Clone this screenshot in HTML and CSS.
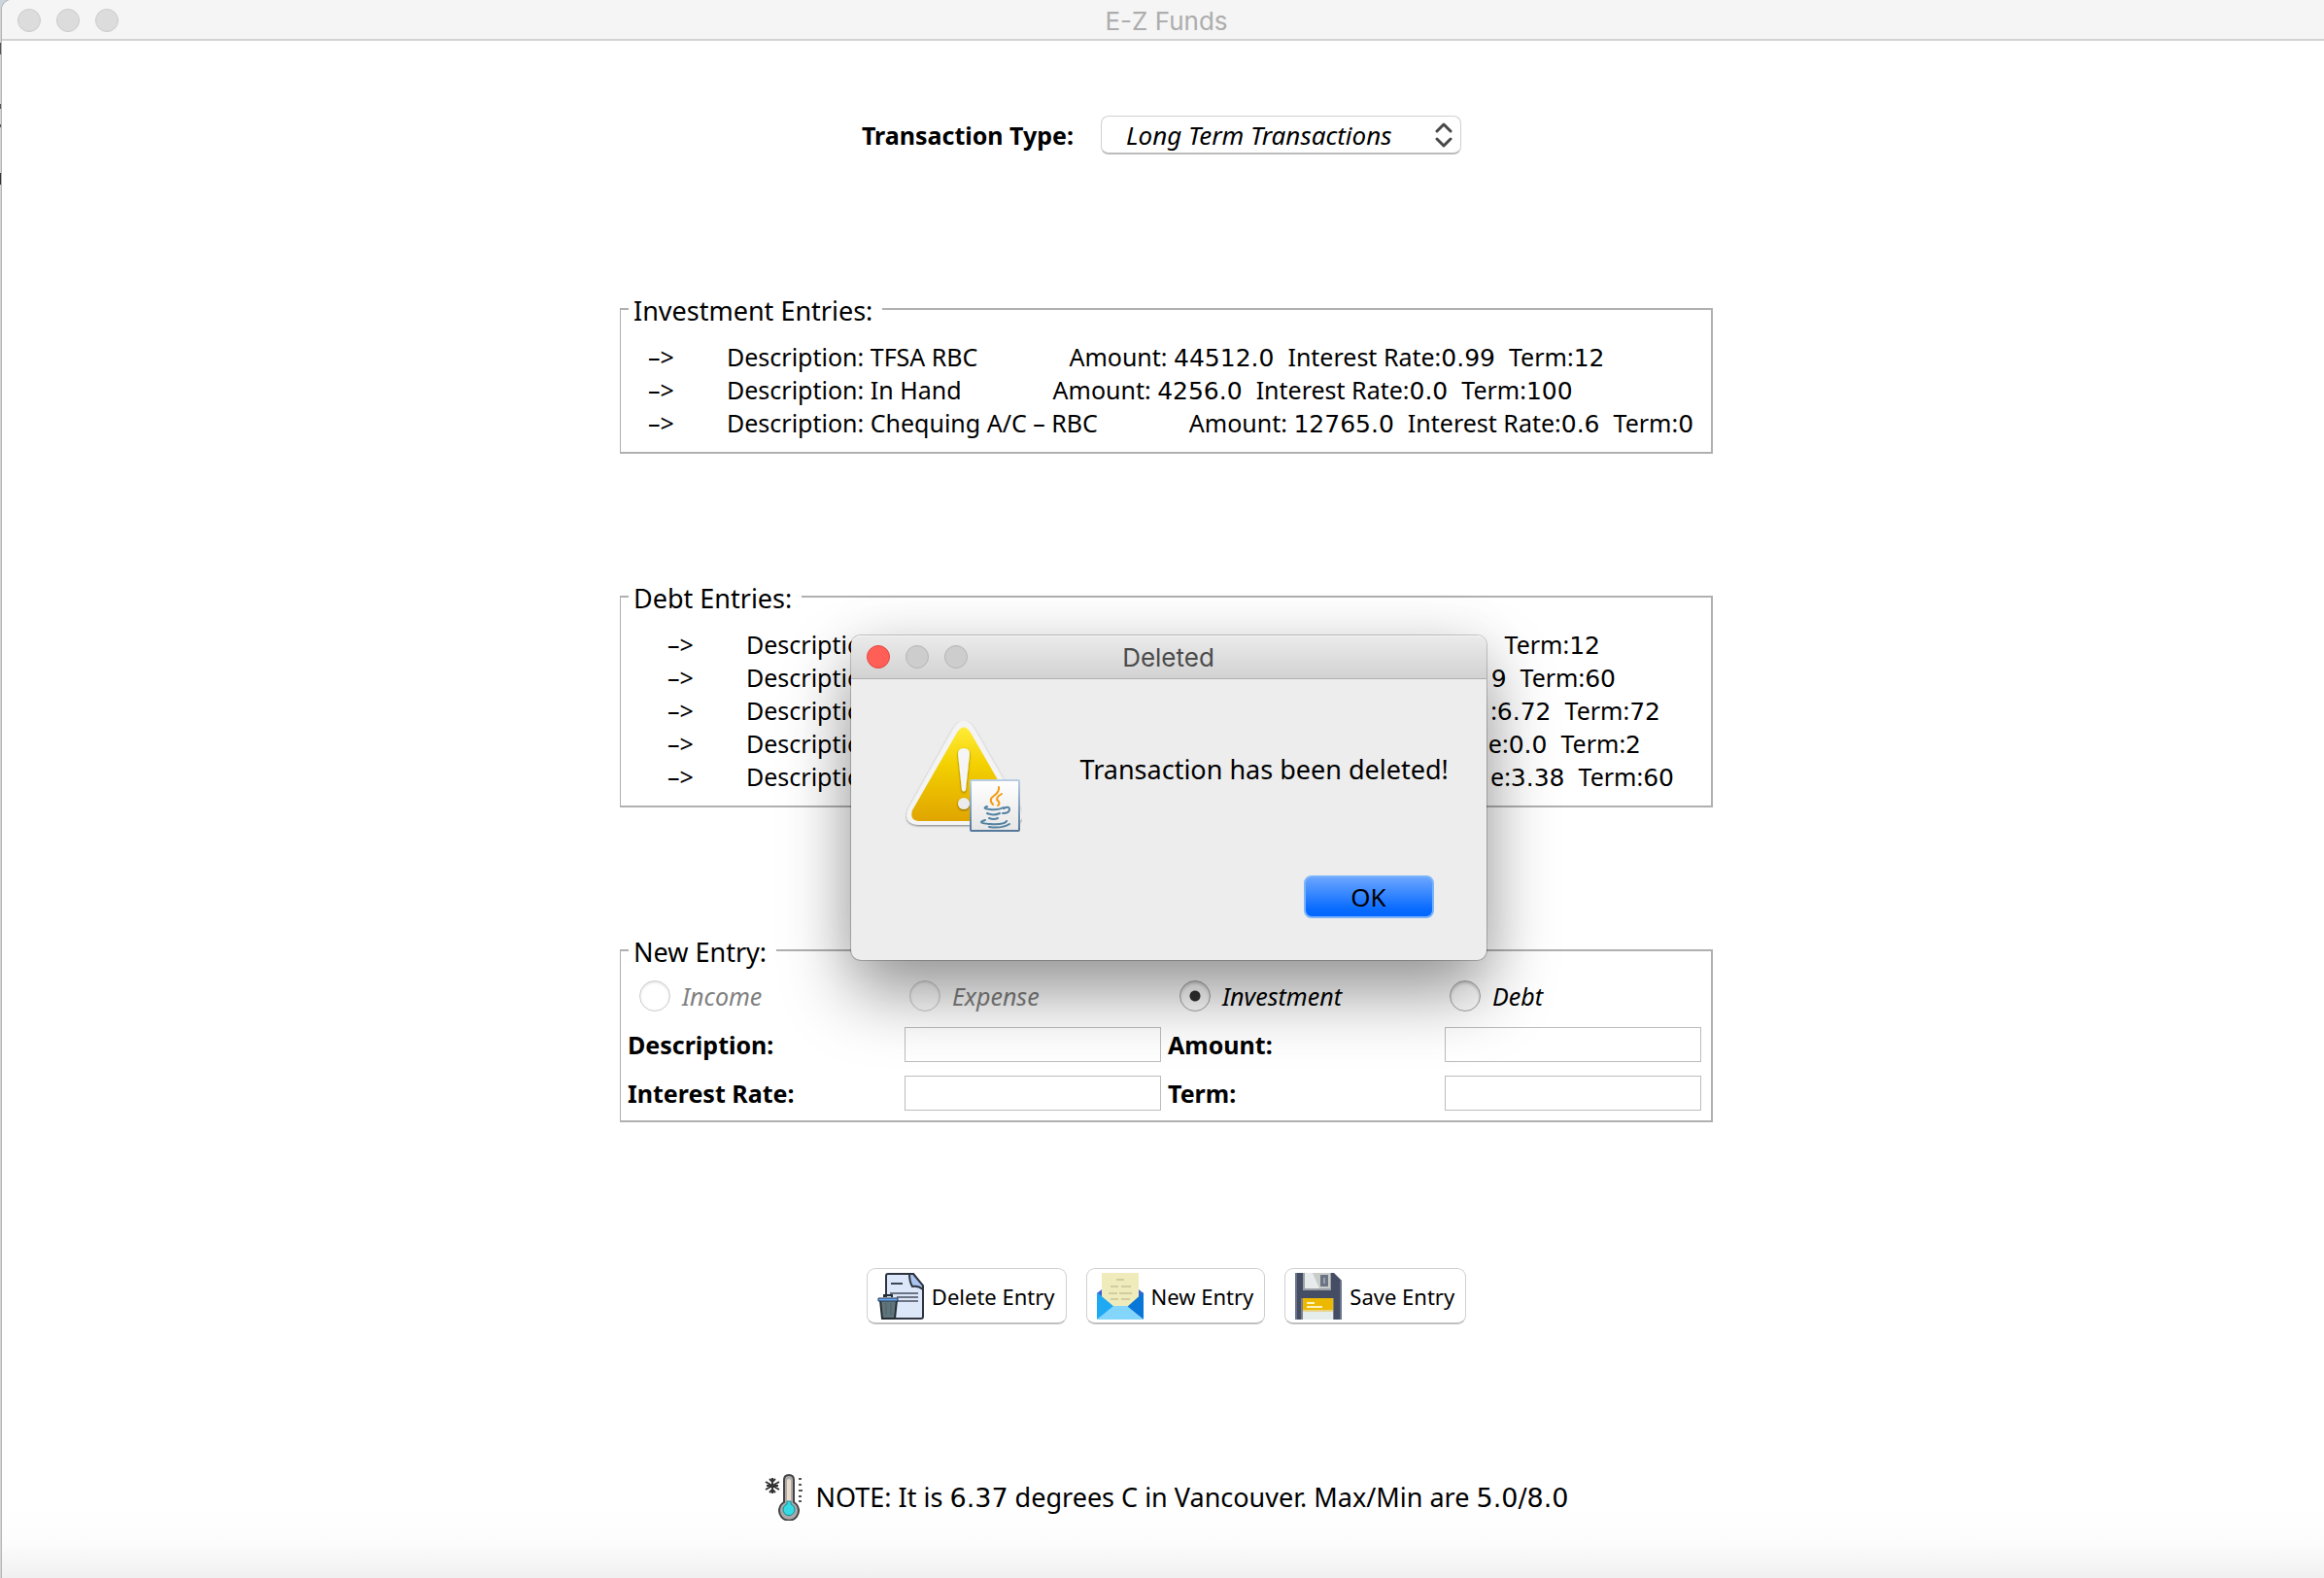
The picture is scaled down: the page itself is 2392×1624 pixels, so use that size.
FILE: index.html
```html
<!DOCTYPE html>
<html lang="en">
<head>
<meta charset="utf-8">
<title>E-Z Funds</title>
<link rel="stylesheet" href="styles.css">
</head>
<body>
<div class="window">
  <header class="titlebar">
    <div class="lights"><i></i><i></i><i></i></div>
    <h1>E-Z Funds</h1>
  </header>
  <main class="content">
    <div class="type-row">
      <label for="type">Transaction Type:</label>
      <div class="combo">
        <select id="type"><option>Long Term Transactions</option></select>
        <svg width="18" height="26" viewBox="0 0 18 26" fill="none" stroke="#484848" stroke-width="3" stroke-linecap="round" stroke-linejoin="round"><path d="M2 9L9 2l7 7M2 17L9 24l7-7"/></svg>
      </div>
    </div>

    <fieldset class="panel entries">
      <legend>Investment Entries:</legend>
      <ul>
        <li><span class="arrow">–&gt;</span><span class="desc">Description: TFSA RBC</span><span>Amount: <b>44512.0</b></span><span>Interest Rate:<b>0.99</b></span><span>Term:<b>12</b></span></li>
        <li><span class="arrow">–&gt;</span><span class="desc">Description: In Hand</span><span>Amount: <b>4256.0</b></span><span>Interest Rate:<b>0.0</b></span><span>Term:<b>100</b></span></li>
        <li><span class="arrow">–&gt;</span><span class="desc">Description: Chequing A/C – RBC</span><span>Amount: <b>12765.0</b></span><span>Interest Rate:<b>0.6</b></span><span>Term:<b>0</b></span></li>
      </ul>
    </fieldset>

    <fieldset class="panel entries debts">
      <legend>Debt Entries:</legend>
      <ul>
        <li><span class="arrow">–&gt;</span><span class="desc">Description:</span><span>Term:<b>12</b></span></li>
        <li><span class="arrow">–&gt;</span><span class="desc">Description:</span><span><b>9</b></span><span>Term:<b>60</b></span></li>
        <li><span class="arrow">–&gt;</span><span class="desc">Description:</span><span>:<b>6.72</b></span><span>Term:<b>72</b></span></li>
        <li><span class="arrow">–&gt;</span><span class="desc">Description:</span><span>e:<b>0.0</b></span><span>Term:<b>2</b></span></li>
        <li><span class="arrow">–&gt;</span><span class="desc">Description:</span><span>e:<b>3.38</b></span><span>Term:<b>60</b></span></li>
      </ul>
    </fieldset>

    <fieldset class="panel">
      <legend>New Entry:</legend>
      <div class="form">
        <label class="radio"><input type="radio" name="kind" disabled>Income</label>
        <label class="radio"><input type="radio" name="kind" disabled>Expense</label>
        <label class="radio"><input type="radio" name="kind" checked>Investment</label>
        <label class="radio"><input type="radio" name="kind">Debt</label>
        <label for="description">Description:</label><input type="text" id="description">
        <label for="amount">Amount:</label><input type="text" id="amount">
        <label for="rate">Interest Rate:</label><input type="text" id="rate">
        <label for="term">Term:</label><input type="text" id="term">
      </div>
    </fieldset>

    <div class="actions">
      <button type="button">
        <svg width="48" height="48" viewBox="0 0 48 48">
          <path d="M9 25V3q0-2 2-2h26l10 13v31q0 2-2 2H19" fill="#dce8fa" stroke="#2f3540" stroke-width="2"/>
          <path d="M10 24v-4h10v26h-8z" fill="#dce8fa"/>
          <path d="M33 1q0 8 3 13 6-1 11 3V13L37 1z" fill="#a9c4ee" stroke="#2f3540" stroke-width="2"/>
          <path d="M14 11h12" stroke="#3f4652" stroke-width="2"/>
          <path d="M13 21h29M20 25h22M20 29h22" stroke="#6c7484" stroke-width="2"/>
          <path d="M3 28h17l-2 19H5z" fill="#5f757b" stroke="#252c33" stroke-width="2"/>
          <path d="M1 26h20v3H1z" fill="#68a9f8" stroke="#26364c" stroke-width="1"/>
          <path d="M7 25v-2h8v2" fill="none" stroke="#252c33" stroke-width="2"/>
          <path d="M9 31v12M14 31v12" stroke="#566b71" stroke-width="2"/>
        </svg>Delete Entry</button>
      <button type="button">
        <svg width="48" height="48" viewBox="0 0 48 48">
          <path d="M0 21l5-4h38l5 4v14H0z" fill="#3d62ce"/>
          <path d="M5 0h38v30L24 40 5 30z" fill="#f0ebba"/>
          <path d="M0 20l18 15L0 48z" fill="#1ea9f2"/>
          <path d="M48 20L31 35l17 13z" fill="#0877d8"/>
          <path d="M0 48l17-14h14l17 14z" fill="#84d5fb"/>
          <path d="M20 7h8M14 14h8M25 14h10M12 21h9M23 21h13M14 27h8M25 27h9" stroke="#d2ccA4" stroke-width="2"/>
        </svg>New Entry</button>
      <button type="button">
        <svg width="48" height="48" viewBox="0 0 48 48">
          <path d="M0 0h40l8 8v40H0z" fill="#454d65"/>
          <path d="M0 0h2v48H0zM46 8h2v40h-2z" fill="#69738a"/>
          <path d="M8 0h29v18H8z" fill="#9ca1a7"/>
          <path d="M10 0h26v16H10z" fill="#c9ccc9"/>
          <path d="M10 0h8l7 16H10z" fill="#e7ebeb"/>
          <path d="M26 2h8v12h-8z" fill="#6b7384"/><path d="M29 5h2v6h-2z" fill="#9ba1ac"/>
          <path d="M6 26h34v22H6z" fill="#79808c"/>
          <path d="M8 26h31v14H8z" fill="#edb900"/>
          <path d="M8 38h31v2H8z" fill="#ead489"/>
          <path d="M8 40h31v8H8z" fill="#e5ecec"/>
          <path d="M12 31h8M12 35h16" stroke="#fff3c0" stroke-width="2"/>
        </svg>Save Entry</button>
    </div>

    <p class="note">
      <svg width="40" height="48" viewBox="0 0 40 48">
        <path d="M8 4v16M1 8l14 8M1 16l14-8M5 5l3 3 3-3M5 19l3-3 3 3M2 12h12" fill="none" stroke="#333" stroke-width="2"/>
        <path d="M20 29V6q0-5 5-5t5 5v23a10 10 0 1 1-10 0z" fill="#aaa" stroke="#444" stroke-width="2"/>
        <path d="M23 30V7q0-2 2-2t2 2v23z" fill="#efdccb"/>
        <path d="M23 28h4v3a6 6 0 1 1-4 0z" fill="#35dbe4" stroke="#168d9a" stroke-width="1"/>
        <path d="M35 5h3M35 11h3M35 17h4M35 23h3M35 28h3" stroke="#555" stroke-width="2"/>
      </svg>
      <span>NOTE: It is <b>6.37</b> degrees C in Vancouver. Max/Min are <b>5.0/8.0</b></span>
    </p>
  </main>

  <section class="dialog" role="alertdialog" aria-labelledby="dialog-title">
    <header class="titlebar">
      <div class="lights"><i class="close"></i><i></i><i></i></div>
      <h2 id="dialog-title">Deleted</h2>
    </header>
    <div class="message">
      <svg width="120" height="118" viewBox="0 0 120 118">
        <defs>
          <linearGradient id="gold" x2="0" y2="1"><stop stop-color="#ffec38"/><stop offset=".4" stop-color="#f3d000"/><stop offset="1" stop-color="#e0a500"/></linearGradient>
          <linearGradient id="paper" x2="0" y2="1"><stop stop-color="#fff"/><stop offset="1" stop-color="#e6e6e6"/></linearGradient>
          <linearGradient id="edge" x2="0" y2="1"><stop stop-color="#b9cee2"/><stop offset="1" stop-color="#55789a"/></linearGradient>
          <filter id="lift" x="-10%" y="-10%" width="120%" height="125%"><feDropShadow dx="0" dy="1" stdDeviation="1" flood-opacity=".5"/></filter>
        </defs>
        <path filter="url(#lift)" d="M49 8q11-17 22 0l47 82q7 15-10 17H13Q-4 105 3 90z" fill="#f4f4f4"/>
        <path d="M53 12q7-11 14 0l46 80q4 10-6 11H13q-9-1-6-11z" fill="url(#gold)"/>
        <path d="M54 34q0-6 6-6t6 6l-4 37q-2 3-4 0z" fill="#f5f5f5" filter="url(#lift)"/>
        <circle cx="60" cy="85" r="6" fill="#ececec" filter="url(#lift)"/>
        <rect x="67" y="61" width="50" height="52" rx="1" fill="url(#paper)" stroke="url(#edge)" stroke-width="2"/>
        <g fill="none" stroke-linecap="round">
          <path d="M96 68q1 5-5 9t-1 9M99 75q-7 4-4 7t0 5" stroke="#f39a0b" stroke-width="2"/>
          <path d="M84 88q-6 2 3 3t14-2M84 95q6 3 13 0M86 100q5 2 9 0M101 90q6-3 6 1t-7 4" stroke="#5382a1" stroke-width="2"/>
          <path d="M82 102q-10 3 5 4t17-3M86 109q13 2 21-3" stroke="#5382a1" stroke-width="2"/>
        </g>
      </svg>
      <p>Transaction has been deleted!</p>
    </div>
    <button type="button" class="ok">OK</button>
  </section>
</div>
</body>
</html>
```
FILE: styles.css
```css
* { box-sizing: border-box; }

body {
  margin: 0;
  overflow: hidden;
  background: linear-gradient(#cdd5dc 0 14px, #d4d4d4 14px 44px, #555 44px 56px, #d4d4d4 56px 107px, #555 107px 112px, #d4d4d4 112px 128px, #555 128px 131px, #d4d4d4 131px 178px, #333 178px 190px, #d4d4d4 190px);
  color: #000;
  font: 25px/34px "Noto Sans", sans-serif;
}

/* The window runs slightly past the right edge of the screen. */
.window {
  position: relative;
  min-height: 100vh;
  margin: 0 -7px 0 2px;
  border-radius: 10px 0 0 0;
  background: linear-gradient(to top, #f0f0f0, #fcfcfc 36px, #fff 72px);
  box-shadow: 0 0 0 1px #b4b4b4;
}

.titlebar {
  display: grid;
  grid-template-columns: 1fr auto 1fr;
  align-items: center;
  height: 42px;
  padding: 0 16px;
  border-bottom: 2px solid #d2d2d2;
  border-radius: 10px 0 0 0;
  background: #f5f5f5;
}
.titlebar h1, .titlebar h2 {
  margin: 0;
  padding-top: 2px;
  color: #adadad;
  font: 26px/40px Inter, sans-serif;
}

.lights { display: flex; gap: 16px; }
.lights i {
  width: 24px;
  height: 24px;
  border: 1px solid #cbcbcb;
  border-radius: 50%;
  background: #dcdcdc;
}

.content {
  display: flex;
  flex-direction: column;
  align-items: center;
  padding-top: 77px;
}

.type-row {
  display: flex;
  align-items: center;
  gap: 28px;
  margin-bottom: 143px;
  padding-right: 10px;
}
.type-row label { font-weight: 700; }

.combo {
  display: flex;
  align-items: center;
  width: 371px;
  height: 40px;
  padding-right: 8px;
  border: 1px solid #d0d0d0;
  border-bottom: 2px solid #bcbcbc;
  border-radius: 8px;
  background: #fff;
}
.combo select {
  flex: 1;
  padding: 0 0 0 25px;
  appearance: none;
  border: 0;
  background: none;
  color: #000;
  font: italic 26px/36px "Noto Sans", sans-serif;
}

.panel {
  width: 1125px;
  margin: 0 0 131px;
  padding: 0;
  border: 2px solid #b0b0b0;
  border-left-width: 1px;
}
.panel legend {
  height: 32px;
  margin-left: 8px;
  padding: 0 10px 0 5px;
  font-size: 27px;
  line-height: 36px;
}

.entries ul { margin: 0; padding: 16px 0 13px 28px; list-style: none; }
.entries li { display: flex; gap: 14px; height: 34px; white-space: nowrap; }
.entries b, .note b { font-family: "DejaVu Sans", sans-serif; font-weight: 400; line-height: 1; }
.arrow { width: 67px; }
.desc { margin-right: 80px; }

/* Debt rows end where their own text ends. */
.debts ul { padding-left: 48px; }
.debts .desc { margin-right: auto; }
.debts li:nth-child(1) { width: 960px; }
.debts li:nth-child(2) { width: 976px; }
.debts li:nth-child(3) { width: 1022px; }
.debts li:nth-child(4) { width: 1002px; }
.debts li:nth-child(5) { width: 1036px; }

.form {
  display: grid;
  grid-template-columns: repeat(4, 278px);
  grid-auto-rows: 50px;
  align-items: center;
  padding: 6px 0 3px 7px;
}
.form label { font-weight: 700; }
.form .radio {
  display: flex;
  align-items: center;
  gap: 12px;
  padding-left: 12px;
  font-weight: 400;
  font-style: italic;
}
.form .radio:has(:disabled) { color: #808080; }
.form [type="text"] {
  height: 36px;
  margin: 0 7px;
  border: 1px solid #bcbcbc;
  background: #fff;
  font: inherit;
}
.form [type="radio"] {
  width: 32px;
  height: 32px;
  margin: 0;
  appearance: none;
  border: 1px solid #a5a5a5;
  border-radius: 50%;
  background: #fff;
  box-shadow: inset 0 2px 3px #0003;
}
.form [type="radio"]:disabled { border-color: #ccc; box-shadow: inset 0 1px 3px #0002; }
.form [type="radio"]:checked { background: radial-gradient(circle, #333 5px, #fff 6px); }

.actions { display: flex; gap: 20px; margin: 19px 0 154px; }
.actions button {
  display: flex;
  align-items: center;
  gap: 8px;
  height: 58px;
  padding: 0 11px 0 10px;
  border: 1px solid #d0d0d0;
  border-bottom: 2px solid #c0c0c0;
  border-radius: 9px;
  background: #fff;
  color: #000;
  font: 22px/32px "Noto Sans", sans-serif;
}

.note { display: flex; align-items: center; gap: 13px; margin: 0; font-size: 27px; }

.dialog {
  position: absolute;
  top: 654px;
  left: 50%;
  width: 654px;
  margin-left: -325px;
  padding-bottom: 43px;
  border-radius: 10px;
  background: #ededed;
  box-shadow: 0 0 0 1px #0003, 0 34px 70px #0006, 0 0 60px #0001;
}
.dialog .titlebar {
  height: 45px;
  border-bottom: 1px solid #b0b0b0;
  border-radius: 10px 10px 0 0;
  background: linear-gradient(#ebebeb, #d2d2d2);
  box-shadow: inset 0 1px #f6f6f6;
}
.dialog .titlebar h2 { color: #4b4b4b; }
.dialog .lights i { border-color: #b5b5b5; background: #cdcdcd; }
.dialog .lights .close { border-color: #e2463f; background: #ff5f57; }

.message { display: flex; gap: 60px; padding: 43px 0 0 56px; }
.message p { margin: 33px 0 0; font-size: 27px; }

.ok {
  display: block;
  width: 134px;
  height: 44px;
  margin: 41px 54px 0 auto;
  padding: 0;
  border: 2px solid #79b4fb;
  border-radius: 8px;
  background: linear-gradient(#6aa5ff, #0a6cff 80%, #0066ff);
  color: #000;
  font: 26px/36px "Noto Sans", sans-serif;
}
```
